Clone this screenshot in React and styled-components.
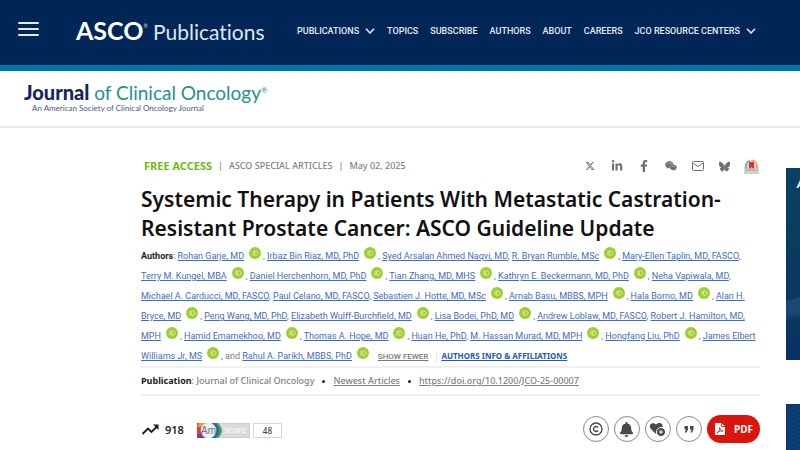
import React from "react";
import styled, { createGlobalStyle } from "styled-components";
import { FaLinkedinIn, FaFacebookF, FaWeixin, FaBell } from "react-icons/fa";
import { FaXTwitter, FaBluesky } from "react-icons/fa6";

const GlobalStyle = createGlobalStyle`
  * {
    box-sizing: border-box;
  }
  body {
    margin: 0;
    background: #fff;
    color: #1b1b1b;
    font-family: "Noto Sans", sans-serif;
    overflow-x: hidden;
  }
  a {
    color: inherit;
  }
  button {
    font-family: inherit;
    cursor: pointer;
  }
`;

const TopBar = styled.header`
  display: flex;
  align-items: center;
  height: 71px;
  padding: 0 18px 4px;
  background: #002657;
  border-bottom: 6px solid #0076a9;
  color: #fff;
`;

const MenuButton = styled.button`
  display: flex;
  flex-direction: column;
  gap: 4px;
  width: 21px;
  margin-bottom: 4px;
  padding: 0;
  background: none;
  border: none;
`;

const MenuLine = styled.span`
  height: 2px;
  border-radius: 1px;
  background: #e4e9f1;
`;

const Brand = styled.a`
  margin-left: 37px;
  width: 221px;
  font-family: Lato, sans-serif;
  font-size: 21px;
  font-variant-ligatures: none;
  line-height: 28px;
  white-space: nowrap;
  text-decoration: none;
  color: #dfe6f0;

  b {
    font-size: 25px;
    font-weight: 700;
    color: #fff;
  }
  sup {
    font-size: 5px;
    vertical-align: 12px;
    line-height: 0;
  }
`;

const Nav = styled.nav`
  display: flex;
  align-items: center;
  gap: 12px;
  font-family: Roboto, sans-serif;
  font-size: 9px;
  font-weight: 500;
  line-height: 14px;
  white-space: nowrap;
`;

const NavLink = styled.a`
  display: flex;
  align-items: center;
  gap: 6px;
  color: #e6ebf3;
  text-decoration: none;
`;

const JournalBar = styled.div`
  height: 57px;
  padding: 10px 24px 0;
  border-bottom: 2px solid #e9e9e9;
`;

const JournalLogo = styled.a`
  display: block;
  font-family: Lato, sans-serif;
  color: #1f9384;
  font-size: 19px;
  line-height: 23px;
  text-decoration: none;

  b {
    color: #14265c;
    font-size: 20px;
    font-weight: 900;
  }
  sup {
    font-size: 8px;
    line-height: 0;
  }
`;

const JournalTagline = styled.div`
  margin-left: 8px;
  font-family: Lato, sans-serif;
  font-size: 8px;
  line-height: 8px;
  color: #4c587c;
`;

const Page = styled.div`
  display: flex;
  justify-content: space-between;
  padding-left: 141px;
`;

const Article = styled.main`
  flex: 1;
  max-width: 619px;
  padding-top: 29px;
`;

const MetaRow = styled.div`
  display: flex;
  align-items: center;
  justify-content: space-between;
  height: 18px;
`;

const Meta = styled.div`
  display: flex;
  align-items: center;
  gap: 6px;
  padding-left: 3px;
  font-size: 9px;
  font-weight: 500;
  line-height: 14px;
  color: #808080;
  white-space: nowrap;
`;

const FreeAccess = styled.strong`
  font-size: 11px;
  font-weight: 700;
  color: #74b814;
`;

const Share = styled.div`
  display: flex;
  align-items: center;
  gap: 12px;
  margin-right: 1px;
  color: #707070;
`;

const ShareButton = styled.button`
  display: flex;
  align-items: center;
  justify-content: center;
  width: 15px;
  height: 16px;
  padding: 0;
  border: none;
  background: none;
  color: inherit;
`;

const Title = styled.h1`
  margin: 10px 0 0;
  font-size: 21px;
  font-weight: 650;
  line-height: 29px;
  color: #111;
`;

const Authors = styled.div`
  margin-top: 3px;
  border-bottom: 2px solid #f1f1f1;
  font-family: Roboto, sans-serif;
  font-size: 9px;
  line-height: 20px;
  color: #777;
  white-space: nowrap;

  b {
    color: #1b1b1b;
  }
`;

const AuthorLine = styled.div`
  height: 20px;
`;

const AuthorLink = styled.a`
  color: #3f6cc0;
`;

const Orcid = styled.svg`
  width: 12px;
  height: 12px;
  margin: 0 2px 0 5px;
  vertical-align: 0;
`;

const ShowFewer = styled.button`
  margin-left: 7px;
  padding: 0 8px 0 0;
  border: none;
  border-right: 1px solid #e4e8ef;
  background: none;
  color: #777;
  font-family: Roboto, sans-serif;
  font-size: 8px;
  font-weight: 500;
  line-height: 12px;
  text-decoration: underline;
`;

const InfoLink = styled.a`
  margin-left: 4px;
  font-family: "Noto Sans", sans-serif;
  font-size: 8px;
  font-weight: 700;
  color: #1d5bb5;
`;

const Publication = styled.div`
  display: flex;
  align-items: center;
  gap: 8px;
  height: 28px;
  border-bottom: 2px solid #f1f1f1;
  font-size: 9px;
  font-weight: 500;
  line-height: 14px;
  color: #808080;
  white-space: nowrap;

  b {
    color: #1b1b1b;
    font-weight: 700;
  }
`;

const Dot = styled.span`
  width: 3px;
  height: 3px;
  border-radius: 50%;
  background: #1b1b1b;
`;

const Actions = styled.div`
  display: flex;
  align-items: center;
  justify-content: space-between;
  margin-top: 19px;
`;

const Metrics = styled.div`
  display: flex;
  align-items: center;
  font-size: 11px;
  font-weight: 600;
`;

const Downloads = styled.span`
  margin: 0 13px 0 5px;
`;

const Score = styled.a`
  display: flex;
  gap: 3px;
  margin-top: 3px;
  text-decoration: none;
`;

const ScoreValue = styled.span`
  width: 29px;
  height: 15px;
  border: 1px solid #d5d5d5;
  font-size: 8px;
  font-weight: 500;
  line-height: 13px;
  text-align: center;
  color: #444;
`;

const Tools = styled.div`
  display: flex;
  align-items: center;
  gap: 5px;
`;

const RoundButton = styled.button`
  display: flex;
  align-items: center;
  justify-content: center;
  width: 26px;
  height: 26px;
  padding: 0;
  border: 1px solid #8a8a8a;
  border-radius: 50%;
  background: #fff;
  color: #4a4a4a;
`;

const PdfButton = styled.button`
  display: flex;
  align-items: center;
  gap: 9px;
  height: 28px;
  padding: 0 7px 0 8px;
  border: none;
  border-radius: 14px;
  background: #d9150c;
  color: #fff;
  font-size: 10px;
  font-weight: 700;
`;

const Ads = styled.aside`
  display: flex;
  flex-direction: column;
  gap: 44px;
  width: 14px;
  padding-top: 40px;
  overflow: hidden;
`;

const Ad = styled.div`
  flex: none;
  height: ${(props) => (props.$hatched ? "46px" : "192px")};
  padding: 9px 0 0 11px;
  overflow: hidden;
  background: ${(props) =>
    props.$hatched
      ? "repeating-linear-gradient(20deg, #0b4079 0 2px, #093a70 2px 4px)"
      : `linear-gradient(165deg, transparent 128px, #2b598780 129px 142px, transparent 150px),
         repeating-linear-gradient(45deg, transparent 0 2px, #1d4f8040 2px 3px),
         linear-gradient(#06425f, #07375f 60%, #062f5f)`};
  border: solid #14304f;
  border-width: ${(props) => (props.$hatched ? "1px 0 0 1px" : "0")};
  color: #fff;
  font-family: "Open Sans", sans-serif;
  font-size: 10px;
  font-style: italic;
  font-weight: 700;
  line-height: 14px;
`;

// each entry: name, has ORCID badge, name carries on in the next line
const authorLines = [
  [["Rohan Garje, MD", true], ["Irbaz Bin Riaz, MD, PhD", true], ["Syed Arsalan Ahmed Naqvi, MD"], ["R. Bryan Rumble, MSc", true], ["Mary-Ellen Taplin, MD, FASCO"]],
  [["Terry M. Kungel, MBA", true], ["Daniel Herchenhorn, MD, PhD", true], ["Tian Zhang, MD, MHS", true], ["Kathryn E. Beckermann, MD, PhD", true], ["Neha Vapiwala, MD"]],
  [["Michael A. Carducci, MD, FASCO"], ["Paul Celano, MD, FASCO"], ["Sebastien J. Hotte, MD, MSc", true], ["Arnab Basu, MBBS, MPH", true], ["Hala Borno, MD", true], ["Alan H.", false, true]],
  [["Bryce, MD", true], ["Peng Wang, MD, PhD"], ["Elizabeth Wulff-Burchfield, MD", true], ["Lisa Bodei, PhD, MD", true], ["Andrew Loblaw, MD, FASCO"], ["Robert J. Hamilton, MD,", false, true]],
  [["MPH", true], ["Hamid Emamekhoo, MD", true], ["Thomas A. Hope, MD", true], ["Huan He, PhD"], ["M. Hassan Murad, MD, MPH", true], ["Hongfang Liu, PhD", true], ["James Elbert", false, true]],
  [["Williams Jr, MS", true]],
];

const OrcidIcon = () => (
  <Orcid viewBox="0 0 12 12" aria-label="ORCID">
    <circle cx="6" cy="6" r="6" fill="#a0cd31" />
    <path d="M4 3.8v4.5M5.6 3.9h1.1c3 0 3 4.3 0 4.3H5.6z" fill="none" stroke="#e0f0b5" strokeWidth="0.9" />
  </Orcid>
);

const Author = ({ author: [name, orcid, open] }) => (
  <>
    <AuthorLink href="#">{name}</AuthorLink>
    {orcid && <OrcidIcon />}
    {open ? null : ", "}
  </>
);

const Chevron = () => (
  <svg width="10" height="6" viewBox="0 0 10 6" fill="none" stroke="currentColor" strokeWidth="1.5" aria-hidden="true">
    <path d="M1 .7 5 5 9 .7" />
  </svg>
);

const navItems = [
  ["PUBLICATIONS", true],
  ["TOPICS"],
  ["SUBSCRIBE"],
  ["AUTHORS"],
  ["ABOUT"],
  ["CAREERS"],
  ["JCO RESOURCE CENTERS", true],
];

const App = () => {
  return (
    <>
      <GlobalStyle />
      <TopBar>
        <MenuButton aria-label="Menu">
          <MenuLine />
          <MenuLine />
          <MenuLine />
        </MenuButton>
        <Brand href="#"><b>ASCO</b><sup>®</sup> Publications</Brand>
        <Nav>
          {navItems.map(([label, more]) => (
            <NavLink href="#" key={label}>{label}{more && <Chevron />}</NavLink>
          ))}
        </Nav>
      </TopBar>
      <JournalBar>
        <JournalLogo href="#"><b>Journal</b> of Clinical Oncology<sup>®</sup></JournalLogo>
        <JournalTagline>An American Society of Clinical Oncology Journal</JournalTagline>
      </JournalBar>
      <Page>
        <Article>
          <MetaRow>
            <Meta>
              <FreeAccess>FREE ACCESS</FreeAccess>
              <span>|</span>
              <span>ASCO SPECIAL ARTICLES</span>
              <span>|</span>
              <span>May 02, 2025</span>
            </Meta>
            <Share>
              <ShareButton aria-label="X"><FaXTwitter size={10} /></ShareButton>
              <ShareButton aria-label="LinkedIn"><FaLinkedinIn size={12} /></ShareButton>
              <ShareButton aria-label="Facebook"><FaFacebookF size={12} /></ShareButton>
              <ShareButton aria-label="WeChat"><FaWeixin size={12} /></ShareButton>
              <ShareButton aria-label="Email">
                <svg width="12" height="10" viewBox="0 0 12 10" fill="none" stroke="currentColor">
                  <rect x=".5" y=".5" width="11" height="9" rx="1" />
                  <path d="m1 2.2 5 3.3 5-3.3" />
                </svg>
              </ShareButton>
              <ShareButton aria-label="Bluesky"><FaBluesky size={11} /></ShareButton>
              <ShareButton aria-label="Read">
                <svg width="15" height="15" viewBox="0 0 15 15">
                  <path d="M0 8h15v7H0z" fill="#d3d3cd" />
                  <circle cx="7.5" cy="6.8" r="6.3" fill="#e2d6bd" />
                  <path d="M2.5 9.8a5.6 5.6 0 0 1 3-8" fill="none" stroke="#4aa9b5" strokeWidth="1.4" />
                  <path d="M8 1.2a5.6 5.6 0 0 1 4.5 8" fill="none" stroke="#e5a24a" strokeWidth="1.4" />
                  <path d="M5 3h5v7L7.5 8.2 5 10z" fill="#e22b3c" />
                  <path d="M2 10.5 7.5 9l5.5 1.5v2L7.5 12 2 12.5z" fill="#aeb9bd" />
                </svg>
              </ShareButton>
            </Share>
          </MetaRow>
          <Title>Systemic Therapy in Patients With Metastatic Castration-Resistant Prostate Cancer: ASCO Guideline Update</Title>
          <Authors>
            {authorLines.map((line, i) => (
              <AuthorLine key={i}>
                {i === 0 && <><b>Authors</b>: </>}
                {line.map((author) => <Author key={author[0]} author={author} />)}
                {i === 5 && (
                  <>
                    and <AuthorLink href="#">Rahul A. Parikh, MBBS, PhD</AuthorLink>
                    <OrcidIcon />
                    <ShowFewer>SHOW FEWER</ShowFewer>
                    <InfoLink href="#">AUTHORS INFO &amp; AFFILIATIONS</InfoLink>
                  </>
                )}
              </AuthorLine>
            ))}
          </Authors>
          <Publication>
            <span><b>Publication</b>: Journal of Clinical Oncology</span>
            <Dot />
            <a href="#">Newest Articles</a>
            <Dot />
            <a href="#">https://doi.org/10.1200/JCO-25-00007</a>
          </Publication>
          <Actions>
            <Metrics>
              <svg width="19" height="19" viewBox="0 0 19 19" fill="none" stroke="currentColor" strokeWidth="1.8" aria-hidden="true">
                <path d="M1.5 14 7 8.5l3.5 3.5L16 6.5" />
                <path d="M12 4.5h5.5V10z" fill="currentColor" stroke="none" />
              </svg>
              <Downloads>918</Downloads>
              <Score href="#">
                <svg width="53" height="15" viewBox="0 0 53 15">
                  <rect x=".5" y=".5" width="52" height="14" fill="#dadada" stroke="#ccc" />
                  <path d="M0 0h12v15H0z" fill="#d8403a" />
                  <path d="M2 0h10v4H0z" fill="#ef9a32" />
                  <path d="M0 11h12v4H0z" fill="#7b3d91" />
                  <path d="M12 0h9q8 8 0 15h-9z" fill="#4ba84e" />
                  <path d="M15 0h4q7 8 0 15h-4z" fill="#2868b1" />
                  <circle cx="11.5" cy="7.5" r="7.8" fill="#e9edef" />
                  <text x="4" y="11" fontFamily="Liberation Sans" fontSize="10" fontWeight="400" fill="#667780">Am</text>
                  <text x="27" y="10" fontFamily="Liberation Sans" fontSize="9" fontWeight="400" fill="#fff">score</text>
                </svg>
                <ScoreValue>48</ScoreValue>
              </Score>
            </Metrics>
            <Tools>
              <RoundButton aria-label="Copyright">
                <svg width="14" height="14" viewBox="0 0 14 14" fill="none" stroke="currentColor" strokeWidth="1.4">
                  <circle cx="7" cy="7" r="6" />
                  <path d="M9 5.5a2.5 2.5 0 1 0 0 3" />
                </svg>
              </RoundButton>
              <RoundButton aria-label="Alerts"><FaBell size={15} /></RoundButton>
              <RoundButton aria-label="Add to favorites">
                <svg width="17" height="15" viewBox="0 0 17 15">
                  <path d="M7 12 1.5 6.5C-1 3 3-1 7 2.5c4-3.500 8-.500 6 3.500z" fill="currentColor" />
                  <circle cx="12" cy="10" r="4.5" fill="currentColor" stroke="#fff" />
                  <path d="M12 8v4M10 10h4" stroke="#fff" />
                </svg>
              </RoundButton>
              <RoundButton aria-label="Cite">
                <svg width="10" height="7" viewBox="0 0 10 7" fill="currentColor">
                  <path d="M.5 0H4v3.5l-1.500 3H.8L2 3.500H.5zM6 0h3.500v3.500L8 6.500H6.300l1.200-3H6z" />
                </svg>
              </RoundButton>
              <PdfButton>
                <svg width="10" height="12" viewBox="0 0 10 12">
                  <path d="M0 0h6.5L10 3.500V12H0z" fill="#fff" />
                  <path d="M6.500 0v3.500H10M2 10c2-1 3-3.500 2.700-5.500C5.500 7 6.500 8 8.300 8 5.500 7.700 4 8.300 2 10z" fill="none" stroke="#d9150c" strokeWidth=".8" />
                </svg>
                PDF
              </PdfButton>
            </Tools>
          </Actions>
        </Article>
        <Ads>
          <Ad>A</Ad>
          <Ad $hatched />
        </Ads>
      </Page>
    </>
  );
};

export default App;
